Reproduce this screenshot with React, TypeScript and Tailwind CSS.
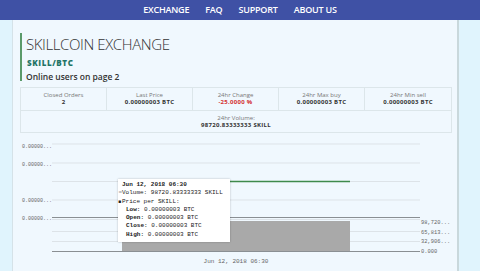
import React from "react";

const stats = [
  { label: "Closed Orders", value: "2" },
  { label: "Last Price", value: "0.00000003 BTC" },
  { label: "24hr Change", value: "-25.0000 %", red: true },
  { label: "24hr Max buy", value: "0.00000003 BTC" },
  { label: "24hr Min sell", value: "0.00000003 BTC" },
];

const ohlc = [
  ["Low", "0.00000003 BTC"],
  ["Open", "0.00000003 BTC"],
  ["Close", "0.00000003 BTC"],
  ["High", "0.00000003 BTC"],
];

function Chart() {
  const mono = "'Liberation Mono', 'DejaVu Sans Mono', monospace";
  return (
    <div className="relative h-[139px]">
      <svg width="445" height="139" viewBox="13 132 445 139" className="block">
        {[143, 162, 180.5, 199].map((y) => (
          <line key={y} x1="52" x2="420" y1={y} y2={y} stroke="#dde3e8" strokeWidth="1" />
        ))}
        <line x1="52" x2="420" y1="216.5" y2="216.5" stroke="#8a8f93" strokeWidth="1" />
        <line x1="52" x2="420" y1="218.5" y2="218.5" stroke="#dde3e8" strokeWidth="1" />
        <line x1="52" x2="420" y1="230.5" y2="230.5" stroke="#dde3e8" strokeWidth="1" />
        <line x1="52" x2="420" y1="240.5" y2="240.5" stroke="#dde3e8" strokeWidth="1" />
        <rect x="122" y="220" width="228" height="30" fill="#a9a9a9" />
        <line x1="52" x2="420" y1="250.5" y2="250.5" stroke="#8a8f93" strokeWidth="1" />
        <line x1="122" x2="350" y1="180.5" y2="180.5" stroke="#3f8a4c" strokeWidth="1.5" />
        <g fontFamily={mono} fill="#666">
          {[145, 162.5, 199, 217].map((y) => (
            <text key={y} x="22" y={y + 2} fontSize="5">0.00000...</text>
          ))}
          <g fontSize="5.4">
            <text x="421" y="223">98,720...</text>
            <text x="421" y="233">65,813...</text>
            <text x="421" y="242">32,906...</text>
            <text x="421" y="252">0.000</text>
          </g>
          <text x="236" y="262" fontSize="6" textAnchor="middle">Jun 12, 2018 06:30</text>
        </g>
      </svg>
      <div
        className="absolute left-[105px] top-[46px] w-[112px] h-[63px] bg-white shadow-[0_0_2px_rgba(0,0,0,0.25)] pl-[4px] pt-[2px] text-[6px] leading-[8.3px] text-[#222] whitespace-nowrap"
        style={{ fontFamily: mono }}
      >
        <div className="font-bold">Jun 12, 2018 06:30</div>
        <div className="relative">
          <span className="absolute -left-[3.5px] text-[#999]">=</span>Volume: 98720.83333333 SKILL
        </div>
        <div className="relative">
          <span className="absolute -left-[3.5px] top-0 text-[5px]">■</span>Price per SKILL:
        </div>
        {ohlc.map(([k, v]) => (
          <div key={k} className="pl-[4px]">
            <span className="font-bold">{k}:</span> {v}
          </div>
        ))}
      </div>
    </div>
  );
}

export default function App() {
  return (
    <div
      className="w-[480px] h-[271px] overflow-hidden bg-[#e0f4fd] text-[#333]"
      style={{ fontFamily: "'Open Sans', 'Noto Sans', sans-serif" }}
    >
      <nav className="h-[20px] bg-[#3f51a5] flex items-center justify-center gap-[16px] text-white text-[9px] font-semibold tracking-[-0.2px]">
        <span>EXCHANGE</span>
        <span>FAQ</span>
        <span>SUPPORT</span>
        <span>ABOUT US</span>
      </nav>
      <div className="ml-[12px] w-[447px] h-[251px] bg-[#f0f8fe] border-l border-[#d5e2e8] border-r-2 border-r-[#c9d8dc]">
        <div className="pt-[13px] pl-[7px]">
          <div className="border-l-[2px] border-[#5a9a6a] pl-[4px] h-[48px]">
            <h1 className="text-[15px] font-light leading-[20px] pt-[1px] text-[#333] tracking-[-0.4px]">
              SKILLCOIN EXCHANGE
            </h1>
            <div className="text-[8px] font-extrabold text-[#1f7467] leading-[10px] mt-[4px] pl-[1px] tracking-[0.6px]">
              SKILL/BTC
            </div>
            <div className="text-[8.5px] font-semibold leading-[10px] mt-[4px] text-[#333]">Online users on page 2</div>
          </div>
        </div>
        <div className="ml-[7px] mt-[6px] w-[432px] border border-[#dce6ea] text-center text-[6px]">
          <div className="grid grid-cols-5 h-[22px]">
            {stats.map((s, i) => (
              <div
                key={s.label}
                className={`flex flex-col justify-center leading-[7px] ${i < 4 ? "border-r border-[#dce6ea]" : ""}`}
              >
                <div className="text-[#777]">{s.label}</div>
                <div className={`font-bold tracking-[0.3px] ${s.red ? "text-[#d32f2f]" : "text-[#333]"}`}>{s.value}</div>
              </div>
            ))}
          </div>
          <div className="h-[22px] border-t border-[#dce6ea] flex flex-col justify-center leading-[7px]">
            <div className="text-[#777]">24hr Volume:</div>
            <div className="font-bold tracking-[0.3px]">98720.83333333 SKILL</div>
          </div>
        </div>
        <Chart />
      </div>
    </div>
  );
}
